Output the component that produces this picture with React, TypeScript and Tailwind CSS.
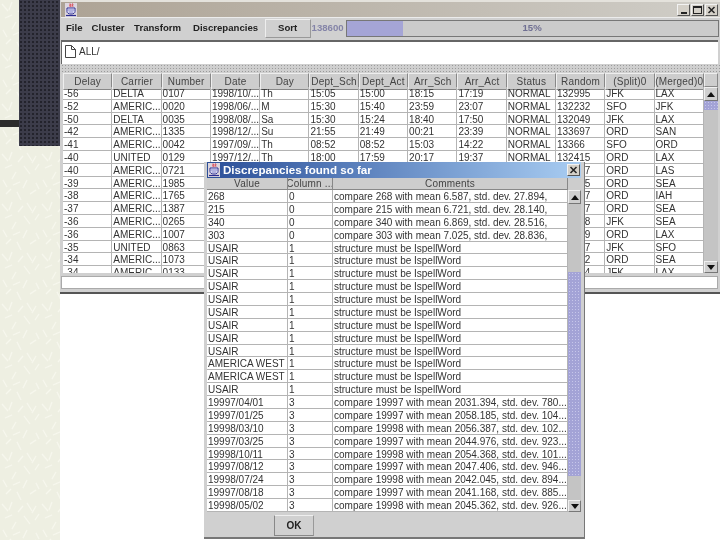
import React from "react";

const FONT = "font-['Liberation_Sans',Arial,sans-serif]";

const mainCols = ["Delay", "Carrier", "Number", "Date", "Day", "Dept_Sch", "Dept_Act", "Arr_Sch", "Arr_Act", "Status", "Random", "(Split)0", "(Merged)0"];

const mainRows = [
  ["-56", "DELTA", "0107", "1998/10/...", "Th", "15:05", "15:00", "18:15", "17:19", "NORMAL", "132995", "JFK", "LAX"],
  ["-52", "AMERIC...", "0020", "1998/06/...", "M", "15:30", "15:40", "23:59", "23:07", "NORMAL", "132232", "SFO", "JFK"],
  ["-50", "DELTA", "0035", "1998/08/...", "Sa", "15:30", "15:24", "18:40", "17:50", "NORMAL", "132049", "JFK", "LAX"],
  ["-42", "AMERIC...", "1335", "1998/12/...", "Su", "21:55", "21:49", "00:21", "23:39", "NORMAL", "133697", "ORD", "SAN"],
  ["-41", "AMERIC...", "0042", "1997/09/...", "Th", "08:52", "08:52", "15:03", "14:22", "NORMAL", "13366", "SFO", "ORD"],
  ["-40", "UNITED", "0129", "1997/12/...", "Th", "18:00", "17:59", "20:17", "19:37", "NORMAL", "132415", "ORD", "LAX"],
  ["-40", "AMERIC...", "0721", "", "", "", "", "", "", "", "132417", "ORD", "LAS"],
  ["-39", "AMERIC...", "1985", "", "", "", "", "", "", "", "132415", "ORD", "SEA"],
  ["-38", "AMERIC...", "1765", "", "", "", "", "", "", "", "132417", "ORD", "IAH"],
  ["-37", "AMERIC...", "1387", "", "", "", "", "", "", "", "132417", "ORD", "SEA"],
  ["-36", "AMERIC...", "0265", "", "", "", "", "", "", "", "132418", "JFK", "SEA"],
  ["-36", "AMERIC...", "1007", "", "", "", "", "", "", "", "132419", "ORD", "LAX"],
  ["-35", "UNITED", "0863", "", "", "", "", "", "", "", "132417", "JFK", "SFO"],
  ["-34", "AMERIC...", "1073", "", "", "", "", "", "", "", "132412", "ORD", "SEA"],
  ["-34", "AMERIC...", "0133", "", "", "", "", "", "", "", "132414", "JFK", "LAX"],
];

const spell = "structure must be IspellWord";

const dialogRows = [
  ["268", "0", "compare 268 with mean 6.587, std. dev. 27.894,"],
  ["215", "0", "compare 215 with mean 6.721, std. dev. 28.140,"],
  ["340", "0", "compare 340 with mean 6.869, std. dev. 28.516,"],
  ["303", "0", "compare 303 with mean 7.025, std. dev. 28.836,"],
  ["USAIR", "1", spell],
  ["USAIR", "1", spell],
  ["USAIR", "1", spell],
  ["USAIR", "1", spell],
  ["USAIR", "1", spell],
  ["USAIR", "1", spell],
  ["USAIR", "1", spell],
  ["USAIR", "1", spell],
  ["USAIR", "1", spell],
  ["AMERICA WEST", "1", spell],
  ["AMERICA WEST", "1", spell],
  ["USAIR", "1", spell],
  ["19997/04/01", "3", "compare 19997 with mean 2031.394, std. dev. 780...."],
  ["19997/01/25", "3", "compare 19997 with mean 2058.185, std. dev. 104...."],
  ["19998/03/10", "3", "compare 19998 with mean 2056.387, std. dev. 102...."],
  ["19997/03/25", "3", "compare 19997 with mean 2044.976, std. dev. 923...."],
  ["19998/10/11", "3", "compare 19998 with mean 2054.368, std. dev. 101...."],
  ["19997/08/12", "3", "compare 19997 with mean 2047.406, std. dev. 946...."],
  ["19998/07/24", "3", "compare 19998 with mean 2042.045, std. dev. 894...."],
  ["19997/08/18", "3", "compare 19997 with mean 2041.168, std. dev. 885...."],
  ["19998/05/02", "3", "compare 19998 with mean 2045.362, std. dev. 926...."],
];

function JavaIcon() {
  return (
    <svg width="12" height="14" viewBox="0 0 12 14" className="shrink-0">
      <rect width="12" height="14" fill="#dcd6de" />
      <path d="M4 1h4v3H4z" fill="#e8a0a8" />
      <path d="M5 .5c1 1-.5 1.5.5 3M7.5.5c1 1-.5 1.5.5 3" stroke="#c83a4a" fill="none" />
      <path d="M2 5v3.5c0 1.5 1.5 2.5 4 2.5s4-1 4-2.5V5z" fill="#f4f4ff" stroke="#2c2c90" />
      <path d="M3 7h6M3.5 9h5" stroke="#7070c0" />
      <path d="M1 12.5h10" stroke="#2c2c90" strokeWidth="1.2" />
    </svg>
  );
}

// pale scratch texture of the slide template
function SlideTexture() {
  const strokes = "M2 4l6 7M12 2l-3 8M18 12l5-6M27 3l5 8M36 6l-4 7M5 18l7-3M16 22l-4 7M24 16l6 8M35 20l4-6M3 30l4 7M13 35l7-3M27 30l-4 8M36 33l3 6M6 44l5-5M17 42l4 8M30 44l6-4";
  return (
    <svg className="absolute inset-0 w-full h-full">
      <defs>
        <pattern id="scratch" width="40" height="50" patternUnits="userSpaceOnUse">
          <path d={strokes} stroke="#f7f7ee" strokeWidth="1.2" fill="none" />
        </pattern>
      </defs>
      <rect width="100%" height="100%" fill="url(#scratch)" />
    </svg>
  );
}

function FrameButton({ children }: { children: React.ReactNode }) {
  return (
    <div className="w-[13px] h-[12px] flex items-center justify-center bg-[#d4d0c8] border border-t-[#f2f2f2] border-l-[#f2f2f2] border-r-[#555] border-b-[#555]">
      {children}
    </div>
  );
}

function CloseGlyph() {
  return (
    <svg width="9" height="8" viewBox="0 0 9 8">
      <path d="M1.5 1l6 6M7.5 1l-6 6" stroke="#222" strokeWidth="1.5" />
    </svg>
  );
}

function ArrowButton({ up, className }: { up?: boolean; className: string }) {
  return (
    <div className={`${className} shrink-0 flex items-center justify-center bg-[#cfcfcf] border border-t-[#f0f0f0] border-l-[#f0f0f0] border-r-[#777] border-b-[#777]`}>
      <svg width="8" height="5" viewBox="0 0 8 5">
        <path d={up ? "M4 0l4 5H0z" : "M0 0h8L4 5z"} fill="#111" />
      </svg>
    </div>
  );
}

const thumb = "bg-[#a3a3d6] bg-[radial-gradient(#c6c6ea_1px,transparent_1px)] bg-[length:3px_3px]";

export default function App() {
  return (
    <div className={`${FONT} relative w-[720px] h-[540px] overflow-hidden flex bg-white text-[#333] blur-[0.3px]`}>
      {/* slide backdrop */}
      <div className="relative w-[60px] h-full shrink-0 flex justify-end bg-[#eeefe2]">
        <SlideTexture />
        <div className="relative w-[41px] h-[146px] bg-[#3c3c4a] bg-[radial-gradient(#23232c_1px,transparent_1.2px)] bg-[length:4px_4px]" />
      </div>
      <div className="absolute left-0 top-[120px] w-[19px] h-[7px] bg-[#2c2c2c]" />

      {/* main window */}
      <div className="flex-1 h-[294px] flex flex-col pl-px bg-[#d0d0d0] border-b-2 border-b-[#555]">
        <div className="h-[2px] shrink-0 bg-[#e4e2dc]" />
        <div className="h-[15px] shrink-0 flex items-center justify-between pl-[4px] pr-[2px] bg-gradient-to-r from-[#ada395] to-[#d0cec8]">
          <JavaIcon />
          <div className="flex gap-px">
            <FrameButton><div className="w-[6px] h-[2px] mt-[6px] bg-[#222]" /></FrameButton>
            <FrameButton><div className="w-[9px] h-[8px] border border-t-2 border-[#222]" /></FrameButton>
            <FrameButton><CloseGlyph /></FrameButton>
          </div>
        </div>

        {/* menu bar */}
        <div className="h-[22px] shrink-0 flex items-center border-t border-t-[#ececec] text-[9.6px] font-bold text-[#222]">
          <span className="ml-[5px]">File</span>
          <span className="ml-[9px]">Cluster</span>
          <span className="ml-[9.5px]">Transform</span>
          <span className="ml-[12px]">Discrepancies</span>
          <div className="ml-[6.5px] w-[46px] h-[19px] flex items-center justify-center bg-[#d0d0d0] border border-t-[#eee] border-l-[#eee] border-r-[#999] border-b-[#999]">Sort</div>
          <span className="ml-px w-[34px] font-bold text-[#8484a8]">138600</span>
          <div className="relative w-[373px] h-[17px] flex bg-[#cbcbcb] border border-[#777]">
            <div className="w-[56px] h-full bg-[#a5a5d6]" />
            <span className="absolute inset-0 flex items-center justify-center text-[#6f6f92]">15%</span>
          </div>
        </div>

        {/* path row */}
        <div className="h-[24px] shrink-0 mr-[2px] mt-px flex items-start gap-[3px] pl-[3px] pt-[3px] bg-white border-t-2 border-l border-[#666] text-[10px]">
          <svg width="11" height="13" viewBox="0 0 11 13" className="shrink-0">
            <path d="M.5.5h6l4 4v8H.5zM6.5.5v4h4" fill="white" stroke="#444" />
          </svg>
          <span className="leading-[13px]">ALL/</span>
        </div>

        {/* split handle */}
        <div className="h-[8px] shrink-0 bg-[#cfcfcf] bg-[radial-gradient(#9a9a9a_0.7px,transparent_0.8px)] bg-[length:3px_3px]" />

        {/* flights table */}
        <div className="h-[201px] shrink-0 flex pt-px pl-[2px] text-[10px]">
          <div className="w-[641px] overflow-hidden">
            <div className="grid grid-cols-[repeat(13,49.3px)] h-[14px]">
              {mainCols.map((col) => (
                <div key={col} className="flex items-center justify-center tracking-[0.2px] bg-[#cdcdcd] border-t border-l border-t-[#eee] border-l-[#eee] border-r border-r-[#888] border-b border-b-[#888] text-[#444] whitespace-nowrap">
                  {col}
                </div>
              ))}
            </div>
            {mainRows.map((row, i) => (
              <div key={i} className="grid grid-cols-[repeat(13,49.3px)] h-[12.8px] bg-white">
                {row.map((cell, j) => (
                  <div key={j} className="pl-px pt-px leading-[11px] border-r border-b border-[#b4b4b4] overflow-hidden whitespace-nowrap">
                    {cell}
                  </div>
                ))}
              </div>
            ))}
          </div>
          <div className="w-[14px] flex flex-col">
            <div className="h-[14px] shrink-0 bg-[#cdcdcd] border border-t-[#eee] border-l-[#eee] border-r-[#888] border-b-[#888]" />
            <ArrowButton up className="h-[14px]" />
            <div className={`h-[9px] shrink-0 ${thumb}`} />
            <div className="flex-1 bg-[#c4c4c4]" />
            <ArrowButton className="h-[12px]" />
          </div>
        </div>
        <div className="h-[13px] mt-[3px] mr-[2px] bg-white border border-[#aaa]" />
      </div>

      {/* discrepancies dialog */}
      <div className="absolute left-[204px] top-[162px] w-[381px] h-[377px] flex flex-col pl-[3px] pr-[3px] bg-[#d0d0d0] border-r border-r-[#777] border-b-2 border-b-[#777]">
        <div className="h-[16px] shrink-0 flex items-center pl-px pr-[1px] gap-[3px] bg-gradient-to-r from-[#2c4f98] to-[#a9cdf2]">
          <JavaIcon />
          <span className="flex-1 text-[11.6px] leading-[14px] font-bold text-white whitespace-nowrap">Discrepancies found so far</span>
          <FrameButton><CloseGlyph /></FrameButton>
        </div>
        <div className="flex flex-1 text-[10px]">
          <div className="w-[361px] overflow-hidden">
            <div className="grid grid-cols-[81px_45px_235px] h-[12px]">
              {["Value", "Column ...", "Comments"].map((col) => (
                <div key={col} className="flex items-center justify-center tracking-[0.2px] bg-[#cdcdcd] border-r border-b border-[#888] text-[#444] whitespace-nowrap overflow-hidden">
                  {col}
                </div>
              ))}
            </div>
            {dialogRows.map((row, i) => (
              <div key={i} className="grid grid-cols-[81px_45px_235px] h-[12.875px] bg-white">
                {row.map((cell, j) => (
                  <div key={j} className="pl-px leading-[13px] border-r border-b border-[#b4b4b4] overflow-hidden whitespace-nowrap">
                    {cell}
                  </div>
                ))}
              </div>
            ))}
            <div className="flex pl-[67px] pt-[3px]">
              <div className="w-[40px] h-[21px] flex items-center justify-center font-bold text-[#222] border border-t-[#eee] border-l-[#888] border-r-[#999] border-b-[#888] bg-[#d0d0d0]">OK</div>
            </div>
          </div>
          <div className="w-[13px] h-[334px] flex flex-col">
            <div className="h-[12px] shrink-0 bg-[#cdcdcd]" />
            <ArrowButton up className="h-[14px]" />
            <div className="h-[68px] shrink-0 bg-[#c4c4c4]" />
            <div className={`h-[204px] shrink-0 ${thumb}`} />
            <div className="flex-1 bg-[#c4c4c4]" />
            <ArrowButton className="h-[12px]" />
          </div>
        </div>
      </div>
    </div>
  );
}
